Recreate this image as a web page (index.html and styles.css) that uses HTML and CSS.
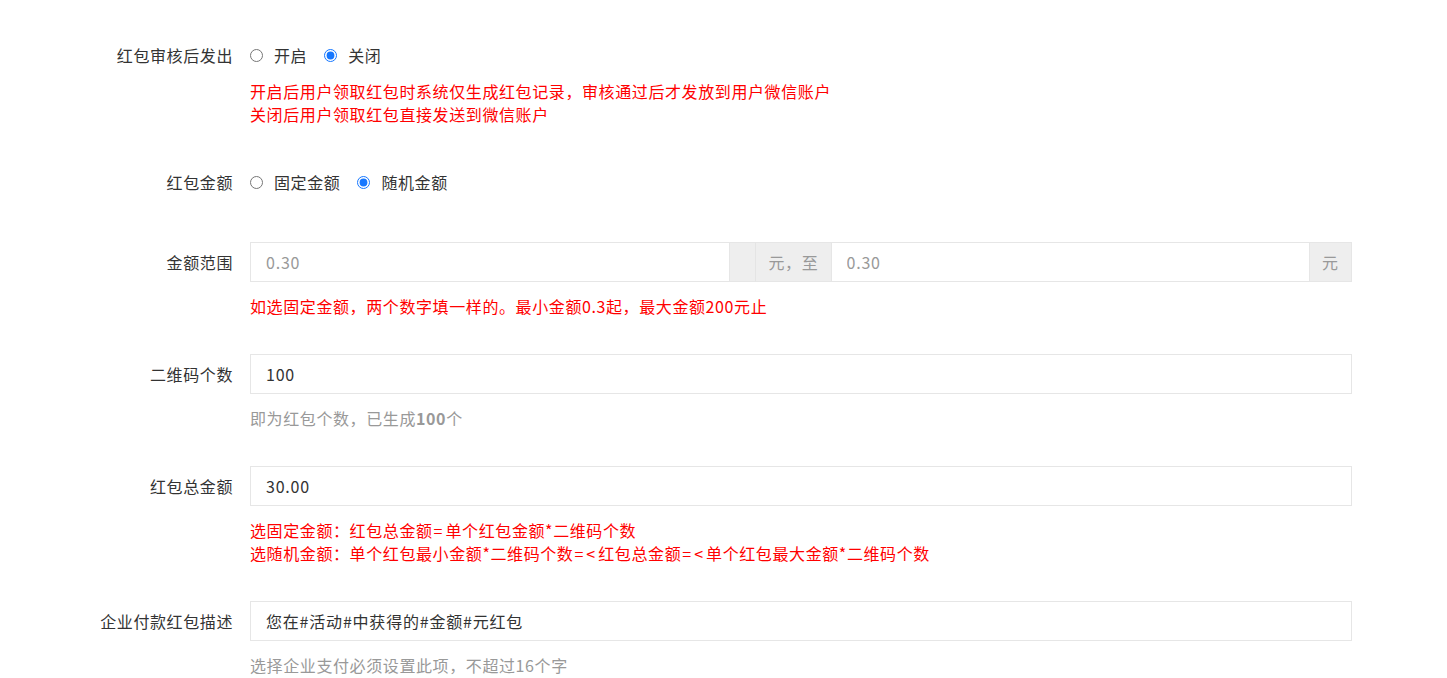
FILE: index.html
```html
<!DOCTYPE html>
<html lang="zh-CN">
<head>
<meta charset="utf-8">
<title>红包设置</title>
<link rel="stylesheet" href="styles.css">
</head>
<body>
<form class="form">
  <div class="group">
    <div class="label">红包审核后发出</div>
    <div class="field">
      <div class="radios">
        <label class="radio"><input type="radio" name="audit"><span>开启</span></label>
        <label class="radio"><input type="radio" name="audit" checked><span>关闭</span></label>
      </div>
      <div class="help red radio-help">开启后用户领取红包时系统仅生成红包记录，审核通过后才发放到用户微信账户<br>关闭后用户领取红包直接发送到微信账户</div>
    </div>
  </div>

  <div class="group group-nohelp">
    <div class="label">红包金额</div>
    <div class="field">
      <div class="radios">
        <label class="radio"><input type="radio" name="amt"><span>固定金额</span></label>
        <label class="radio"><input type="radio" name="amt" checked><span>随机金额</span></label>
      </div>
    </div>
  </div>

  <div class="group">
    <div class="label">金额范围</div>
    <div class="field">
      <div class="input-group">
        <input class="input" type="text" placeholder="0.30">
        <span class="addon addon-blank"></span>
        <span class="addon addon-to">元，至</span>
        <input class="input" type="text" placeholder="0.30">
        <span class="addon addon-unit">元</span>
      </div>
      <div class="help red">如选固定金额，两个数字填一样的。最小金额0.3起，最大金额200元止</div>
    </div>
  </div>

  <div class="group">
    <div class="label">二维码个数</div>
    <div class="field">
      <input class="input full" type="text" value="100">
      <div class="help">即为红包个数，已生成<b>100</b>个</div>
    </div>
  </div>

  <div class="group">
    <div class="label">红包总金额</div>
    <div class="field">
      <input class="input full" type="text" value="30.00">
      <div class="help red">选固定金额：红包总金额<span class="op">=</span>单个红包金额*二维码个数<br>选随机金额：单个红包最小金额*二维码个数<span class="op">=&lt;</span>红包总金额<span class="op">=&lt;</span>单个红包最大金额*二维码个数</div>
    </div>
  </div>

  <div class="group">
    <div class="label">企业付款红包描述</div>
    <div class="field">
      <input class="input full" type="text" value="您在#活动#中获得的#金额#元红包">
      <div class="help">选择企业支付必须设置此项，不超过16个字</div>
    </div>
  </div>
</form>
</body>
</html>
```

FILE: styles.css
```css
html, body {
  margin: 0;
  padding: 0;
  background: #fff;
}
body {
  font-family: "Microsoft YaHei", "Noto Sans CJK SC", "Noto Sans", sans-serif;
  font-size: 16px;
  letter-spacing: 0.6px;
  color: #333;
}
.form {
  padding-top: 35px;
  width: 1352px;
}
.group {
  display: flex;
  align-items: flex-start;
  margin-bottom: 36px;
}
.group-nohelp {
  margin-bottom: 40px;
}
.label {
  width: 233px;
  flex: none;
  text-align: right;
  line-height: 40px;
  height: 40px;
  padding-right: 17px;
  box-sizing: content-box;
  color: #333;
  white-space: nowrap;
}
.field {
  flex: 1;
  min-width: 0;
}
.radios {
  display: flex;
  align-items: center;
  height: 40px;
}
.radio {
  display: flex;
  align-items: center;
  margin-right: 17px;
  cursor: pointer;
}
.radio input {
  margin: 0 11px 0 0;
  width: 13px;
  height: 13px;
  accent-color: #1677ff;
}
.input-group {
  display: flex;
  height: 40px;
}
.input {
  box-sizing: border-box;
  height: 40px;
  border: 1px solid #e6e6e6;
  padding: 0 15px;
  font: inherit;
  font-size: 16px;
  letter-spacing: 0.8px;
  color: #333;
  background: #fff;
  outline: none;
}
.input::placeholder {
  color: #999;
}
.input-group .input {
  flex: 1;
  min-width: 0;
}
.input.full {
  display: block;
  width: 100%;
}
.addon {
  box-sizing: border-box;
  height: 40px;
  line-height: 38px;
  background: #eee;
  border: 1px solid #e6e6e6;
  border-left: none;
  border-right: none;
  color: #999;
  flex: none;
  white-space: nowrap;
}
.addon-blank {
  width: 26px;
  border-right: 1px solid #e4e4e4;
}
.addon-to {
  width: 75px;
  padding-left: 13px;
}
.addon-unit {
  width: 42px;
  padding-left: 12px;
  border-right: 1px solid #e6e6e6;
}
.help {
  margin-top: 13px;
  line-height: 23px;
  color: #999;
  white-space: nowrap;
}
.help b {
  font-weight: bold;
  color: #999;
}
.help .op {
  letter-spacing: 3px;
  margin-left: 1px;
}
.help.red {
  color: #f00;
}
.help.radio-help {
  margin-top: 5px;
}
```
